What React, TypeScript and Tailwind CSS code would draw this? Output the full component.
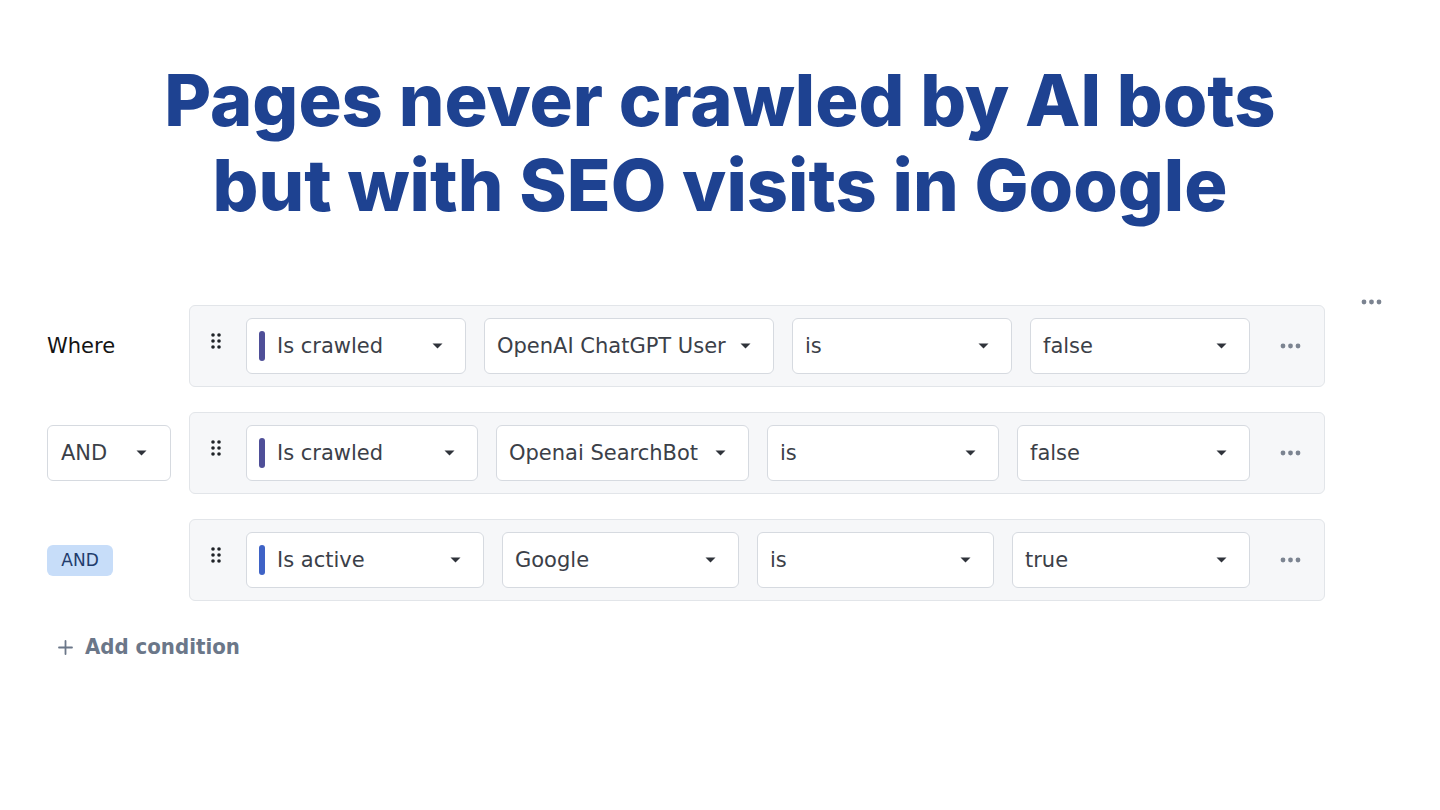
import React from "react";

type Sel = { w: string; label: string; bar?: string };
type Row = { lead: "where" | "andSelect" | "andBadge"; sels: Sel[] };

const rows: Row[] = [
  {
    lead: "where",
    sels: [
      { w: "w-[220px]", label: "Is crawled", bar: "bg-[#4f4f98]" },
      { w: "w-[290px]", label: "OpenAI ChatGPT User" },
      { w: "w-[220px]", label: "is" },
      { w: "w-[220px]", label: "false" },
    ],
  },
  {
    lead: "andSelect",
    sels: [
      { w: "w-[232px]", label: "Is crawled", bar: "bg-[#4f4f98]" },
      { w: "w-[253px]", label: "Openai SearchBot" },
      { w: "w-[232px]", label: "is" },
      { w: "w-[233px]", label: "false" },
    ],
  },
  {
    lead: "andBadge",
    sels: [
      { w: "w-[238px]", label: "Is active", bar: "bg-[#3f63c6]" },
      { w: "w-[237px]", label: "Google" },
      { w: "w-[237px]", label: "is" },
      { w: "w-[238px]", label: "true" },
    ],
  },
];

function Caret() {
  return (
    <svg width="11" height="6" viewBox="0 0 11 6" className="shrink-0">
      <path d="M0.5 0.5 H10.5 L5.5 5.5 Z" fill="#2f333a" />
    </svg>
  );
}

function Dots({ color = "#7c8491" }: { color?: string }) {
  return (
    <svg width="21" height="6" viewBox="0 0 21 6">
      <circle cx="3" cy="3" r="2.4" fill={color} />
      <circle cx="10.5" cy="3" r="2.4" fill={color} />
      <circle cx="18" cy="3" r="2.4" fill={color} />
    </svg>
  );
}

function Handle() {
  return (
    <svg width="10" height="16" viewBox="0 0 10 16" className="mb-[10px] shrink-0">
      {[2, 8, 14].map((y) => (
        <React.Fragment key={y}>
          <circle cx="2" cy={y} r="1.8" fill="#1f2328" />
          <circle cx="8" cy={y} r="1.8" fill="#1f2328" />
        </React.Fragment>
      ))}
    </svg>
  );
}

function Select({ s }: { s: Sel }) {
  return (
    <div
      className={`${s.w} flex h-[56px] shrink-0 items-center justify-between rounded-[6px] border border-[#d6dae0] bg-white pl-[12px] pr-[22px]`}
    >
      <div className="flex items-center">
        {s.bar && <span className={`h-[30px] w-[6px] rounded-full ${s.bar} mr-[12px]`} />}
        <span className="text-[21px] leading-none text-[#3b4048]">{s.label}</span>
      </div>
      <Caret />
    </div>
  );
}

function Lead({ kind }: { kind: Row["lead"] }) {
  if (kind === "where") {
    return <span className="text-[21px] leading-none text-[#141414]">Where</span>;
  }
  if (kind === "andSelect") {
    return (
      <div className="flex h-[56px] w-[124px] items-center justify-between rounded-[6px] border border-[#d6dae0] bg-white pl-[13px] pr-[23px]">
        <span className="text-[21px] leading-none text-[#3b4048]">AND</span>
        <Caret />
      </div>
    );
  }
  return (
    <div className="flex h-[31px] w-[66px] items-center justify-center rounded-[6px] bg-[#c7ddf9]">
      <span className="text-[17px] leading-none text-[#1f3c6c]">AND</span>
    </div>
  );
}

export default function App() {
  return (
    <div className="min-h-[810px] w-full bg-white font-['DejaVu_Sans',sans-serif]">
      <h1 className="pt-[57px] text-center font-['Inter',sans-serif] text-[72px] font-extrabold leading-[85px] text-[#1e4291]">
        Pages never crawled by AI bots
        <br />
        but with SEO visits in Google
      </h1>

      <div className="mt-[69px] flex pl-[47px]">
        <div className="flex flex-col gap-[25px] pt-[9px]">
          {rows.map((r, i) => (
            <div key={i} className="flex items-center">
              <div className="flex w-[142px] items-center">
                <Lead kind={r.lead} />
              </div>
              <div className="flex h-[82px] w-[1136px] items-center rounded-[6px] border border-[#e2e5e9] bg-[#f6f7f9] pl-[21px]">
                <Handle />
                <div className="ml-[25px] flex gap-[18px]">
                  {r.sels.map((s, j) => (
                    <Select key={j} s={s} />
                  ))}
                </div>
                <div className="ml-[30px] flex items-center">
                  <Dots />
                </div>
              </div>
            </div>
          ))}
        </div>
        <div className="ml-[36px] flex h-[12px] items-center">
          <Dots color="#7b8390" />
        </div>
      </div>

      <div className="mt-[32px] flex h-[28px] items-center pl-[58px]">
        <svg width="15" height="15" viewBox="0 0 15 15" className="shrink-0">
          <path d="M7.5 1 V14 M1 7.5 H14" stroke="#6b7789" strokeWidth="1.8" strokeLinecap="round" />
        </svg>
        <span className="ml-[12px] font-['DejaVu_Sans_Condensed','DejaVu_Sans',sans-serif] text-[22px] font-bold leading-none text-[#6b7789]">
          Add condition
        </span>
      </div>
    </div>
  );
}
